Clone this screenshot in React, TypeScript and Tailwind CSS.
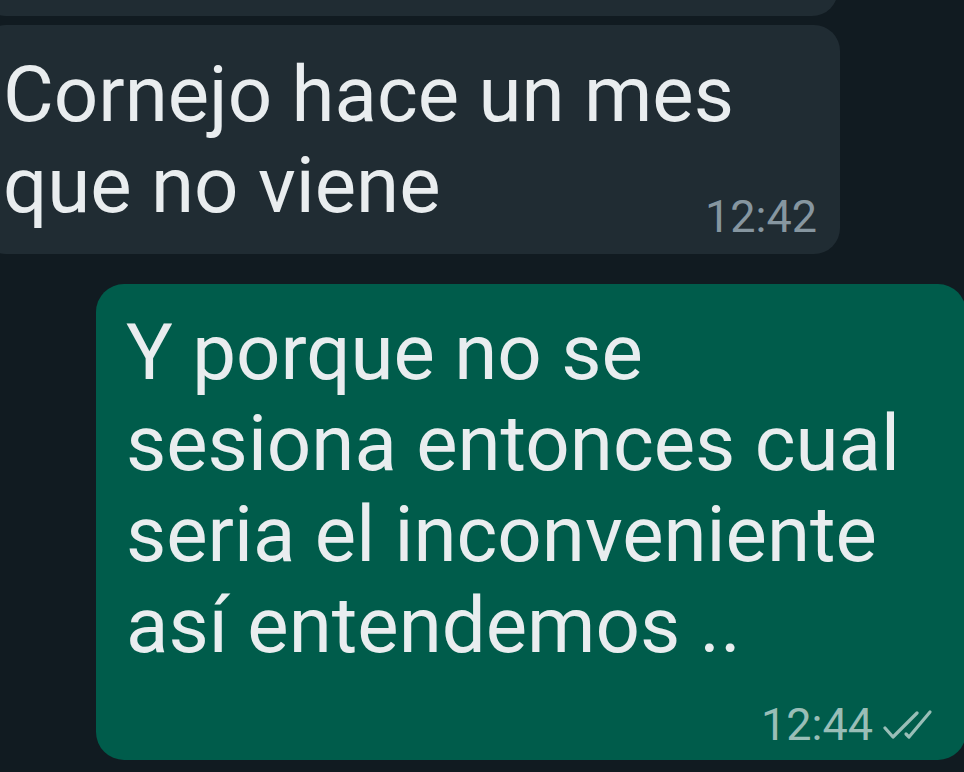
import React from "react";

function DoubleCheck() {
	return (
		<svg width="50" height="32" viewBox="0 0 50 32" fill="none" stroke="#99beb7" strokeWidth="3.2" strokeLinecap="round" strokeLinejoin="round">
			<polyline points="2,19 10,28 34,4" />
			<polyline points="23,25 26,28 47,3" />
		</svg>
	);
}

export default function App() {
	return (
		<div className="h-[772px] w-[964px] overflow-hidden bg-[#111b21] font-['Roboto',sans-serif]">
			<div className="flex flex-col">
				{/* previous message, mostly scrolled off */}
				<div className="-ml-[20px] -mt-[40px] h-[56px] w-[858px] rounded-[26px] bg-[#202c33]" />

				{/* incoming */}
				<div className="-ml-[20px] mt-[9px] flex w-[860px] flex-col rounded-[26px] bg-[#202c33] pl-[23px] pr-[23px] pt-[24px] pb-[15px]">
					<p className="text-[78px] leading-[91px] text-[#e9edef]">
						Cornejo hace un mes
						<br />
						que no viene
					</p>
					<div className="-mt-[36px] self-end text-[45px] leading-[44px] text-[#8696a0]">12:42</div>
				</div>

				{/* outgoing */}
				<div className="ml-[96px] mt-[30px] flex w-[870px] flex-col rounded-[28px] bg-[#005c4b] pl-[30px] pr-[33px] pt-[23px] pb-[13px]">
					<p className="text-[78px] leading-[91px] text-[#e9edef]">
						Y porque no se
						<br />
						sesiona entonces cual
						<br />
						seria el inconveniente
						<br />
						así entendemos ..
					</p>
					<div className="mt-[32px] flex items-center gap-[10px] self-end">
						<span className="text-[45px] leading-[44px] text-[#99beb7]">12:44</span>
						<DoubleCheck />
					</div>
				</div>
			</div>
		</div>
	);
}
